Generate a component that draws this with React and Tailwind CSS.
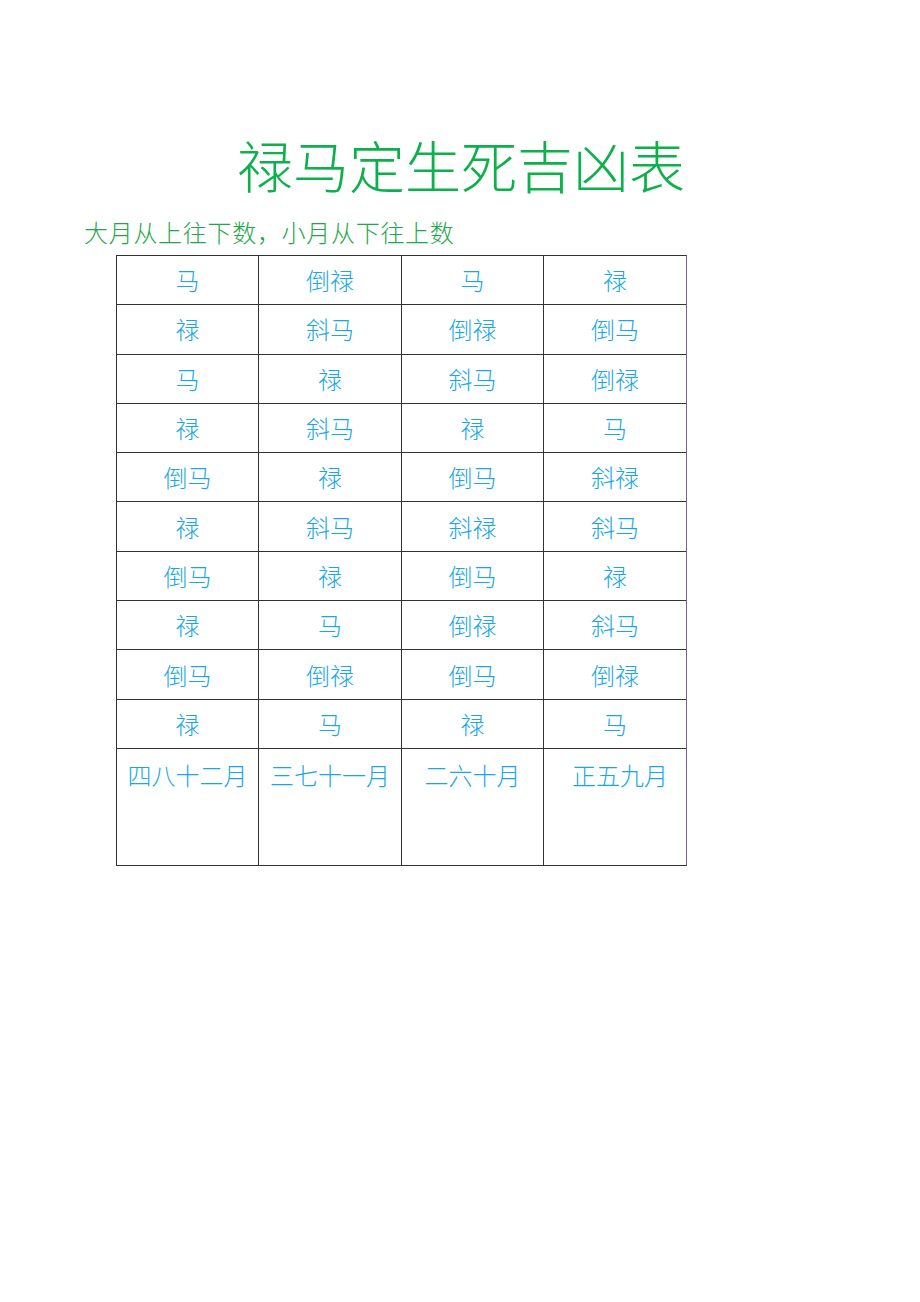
const rows = [
  ["马", "倒禄", "马", "禄"],
  ["禄", "斜马", "倒禄", "倒马"],
  ["马", "禄", "斜马", "倒禄"],
  ["禄", "斜马", "禄", "马"],
  ["倒马", "禄", "倒马", "斜禄"],
  ["禄", "斜马", "斜禄", "斜马"],
  ["倒马", "禄", "倒马", "禄"],
  ["禄", "马", "倒禄", "斜马"],
  ["倒马", "倒禄", "倒马", "倒禄"],
  ["禄", "马", "禄", "马"],
];

const months = ["四八十二月", "三七十一月", "二六十月", "正五九月"];

const App = () => {
  return (
    <div className="w-[920px] h-[1302px] bg-white" style={{ fontFamily: '"Noto Sans CJK SC", "Noto Sans", sans-serif' }}>
      <div className="pt-[126px] flex justify-center">
        <h1 className="text-[56px] leading-[76px] font-light text-[#0db14b] pl-[2px]">禄马定生死吉凶表</h1>
      </div>
      <p className="ml-[84px] mt-[10px] text-[24px] tracking-[0.7px] leading-[40px] font-light text-[#1fa84a]">大月从上往下数，小月从下往上数</p>
      <div className="ml-[116px] mt-[3px] w-[571px] border border-[#333] border-r-[#7a5f86]">
        {rows.map((r, i) => (
          <div key={i} className="grid grid-cols-[142px_143px_142px_142px] h-[49.3px] border-b border-[#333]">
            {r.map((c, j) => (
              <div key={j} className={"flex items-center justify-center text-[24px] font-light text-[#1aa7e6]" + (j < 3 ? " border-r border-[#333]" : "")}>
                {c}
              </div>
            ))}
          </div>
        ))}
        <div className="grid grid-cols-[142px_143px_142px_142px] h-[116px]">
          {months.map((m, j) => (
            <div key={j} className={"pt-[10px] text-center text-[24px] leading-[32px] font-light text-[#1aa7e6]" + (j < 3 ? " border-r border-[#333]" : "") + (j === 3 ? " pl-[10px]" : "")}>
              {m}
            </div>
          ))}
        </div>
      </div>
    </div>
  );
};

export default App;
